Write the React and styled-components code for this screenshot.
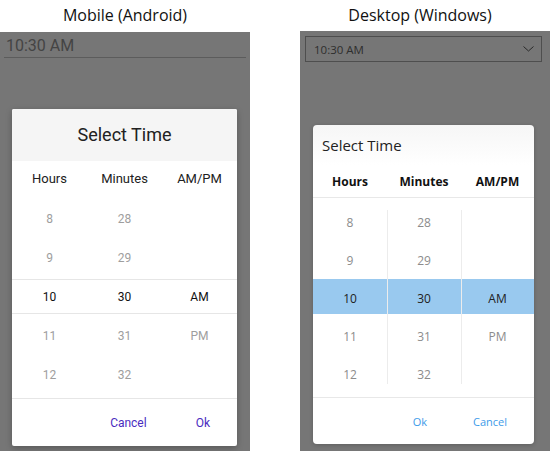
import styled, { createGlobalStyle } from "styled-components";

const GlobalStyle = createGlobalStyle`
  body {
    margin: 0;
    background: #ffffff;
  }
`;

const Page = styled.div`
  width: 550px;
  height: 451px;
  display: flex;
  gap: 50px;
  overflow: hidden;
`;

const Column = styled.div`
  width: 250px;
  display: flex;
  flex-direction: column;
`;

const Title = styled.div`
  height: ${(p) => p.$height}px;
  line-height: 31px;
  text-align: center;
  padding-right: ${(p) => p.$shift || 0}px;
  font-family: "Open Sans", sans-serif;
  font-size: 16px;
  color: #111;
`;

const Screen = styled.div`
  flex: 1;
  background: #767676;
  display: flex;
  flex-direction: column;
`;

/* ---------- Android ---------- */

const AndroidInput = styled.div`
  margin: 0 4px;
  padding: 2px 0 0 2px;
  line-height: 23px;
  font-family: Roboto, sans-serif;
  font-size: 16px;
  color: #444;
  border-bottom: 1px solid #5c5c5c;
`;

const AndroidDialog = styled.div`
  margin: 51px 13px 0 12px;
  height: 337px;
  background: #fff;
  border-radius: 2px;
  box-shadow: 0 2px 6px rgba(0, 0, 0, 0.25);
  display: flex;
  flex-direction: column;
  font-family: Roboto, sans-serif;
  overflow: hidden;
`;

const AndroidHeader = styled.div`
  height: 52px;
  line-height: 52px;
  background: #f5f5f5;
  text-align: center;
  font-size: 18px;
  color: #212121;
`;

const AndroidGrid = styled.div`
  display: grid;
  grid-template-columns: repeat(3, 1fr);
`;

const AndroidHeading = styled.div`
  height: 38px;
  padding-bottom: 4px;
  box-sizing: border-box;
  display: flex;
  align-items: center;
  justify-content: center;
  font-size: 13px;
  color: #212121;
`;

const AndroidPicker = styled(AndroidGrid)`
  position: relative;
  &::before {
    content: "";
    position: absolute;
    left: 0;
    right: 0;
    top: 80px;
    height: 33px;
    border-top: 1px solid #e6e6e6;
    border-bottom: 1px solid #e6e6e6;
  }
`;

const AndroidCell = styled.div`
  height: 39px;
  display: flex;
  align-items: center;
  justify-content: center;
  font-size: 12px;
  color: ${(p) => (p.$selected ? "#111" : "#9e9e9e")};
`;

const AndroidFooter = styled.div`
  margin-top: 4px;
  border-top: 1px solid #e6e6e6;
  height: 47px;
  display: flex;
  align-items: center;
  justify-content: flex-end;
  gap: 17px;
  padding-right: 11px;
`;

const AndroidButton = styled.div`
  padding: 8px 16px;
  font-size: 12px;
  font-weight: 400;
  color: #4a2cc0;
`;

/* ---------- Windows ---------- */

const WinInput = styled.div`
  margin: 5px 8px 0 5px;
  height: 26px;
  box-sizing: border-box;
  border: 1px solid #4e4e4e;
  display: flex;
  align-items: center;
  justify-content: space-between;
  padding: 0 7px 0 8px;
  font-family: "Open Sans", sans-serif;
  font-size: 11.5px;
  color: #2e2e2e;
`;

const WinDialog = styled.div`
  margin: 63px 16px 0 13px;
  height: 319px;
  background: linear-gradient(#f6f6f6, #ffffff 40px);
  border-radius: 4px;
  box-shadow: 0 1px 4px rgba(0, 0, 0, 0.2);
  display: flex;
  flex-direction: column;
  font-family: "Open Sans", sans-serif;
  overflow: hidden;
`;

const WinTitle = styled.div`
  height: 40px;
  line-height: 40px;
  padding-left: 9px;
  font-size: 15px;
  color: #222;
`;

const WinGrid = styled.div`
  display: grid;
  grid-template-columns: 74px 74px 73px;
`;

const WinHeadings = styled(WinGrid)`
  height: 33px;
  box-sizing: border-box;
  border-bottom: 1px solid #e8e8e8;
`;

const WinHeading = styled.div`
  display: flex;
  align-items: center;
  justify-content: center;
  font-size: 12px;
  font-weight: 700;
  color: #111;
`;

const WinColumn = styled.div`
  position: relative;
  display: flex;
  flex-direction: column;
  gap: 3px;
  padding: 5px 0 7px;
  ${(p) =>
    p.$divider &&
    `&::before {
      content: "";
      position: absolute;
      left: 0;
      top: 12px;
      bottom: 13px;
      width: 1px;
      background: #ececec;
      z-index: 1;
    }`}
`;

const WinCell = styled.div`
  height: 35px;
  padding-top: 3px;
  box-sizing: border-box;
  display: flex;
  align-items: center;
  justify-content: center;
  font-size: 12px;
  color: ${(p) => (p.$selected ? "#222" : "#8c8c8c")};
  background: ${(p) => (p.$selected ? "#99c9ef" : "transparent")};
`;

const WinFooter = styled.div`
  border-top: 1px solid #e8e8e8;
  height: 46px;
  display: flex;
  align-items: center;
  justify-content: flex-end;
  gap: 30px;
  padding-right: 19px;
`;

const WinButton = styled.div`
  padding: 6px 8px;
  font-size: 11px;
  color: #3d9be9;
`;

const hours = ["8", "9", "10", "11", "12"];
const minutes = ["28", "29", "30", "31", "32"];
const meridiem = ["", "", "AM", "PM", ""];
const columns = [hours, minutes, meridiem];
const headings = ["Hours", "Minutes", "AM/PM"];

const Chevron = () => (
  <svg width="11" height="6" viewBox="0 0 11 6">
    <polyline points="0.5,0.5 5.5,5 10.5,0.5" fill="none" stroke="#2a2a2a" strokeWidth="1" />
  </svg>
);

const App = () => {
  return (
    <Page>
      <GlobalStyle />
      <Column>
        <Title $height={32}>Mobile (Android)</Title>
        <Screen>
          <AndroidInput>10:30 AM</AndroidInput>
          <AndroidDialog>
            <AndroidHeader>Select Time</AndroidHeader>
            <AndroidGrid>
              {headings.map((h) => (
                <AndroidHeading key={h}>{h}</AndroidHeading>
              ))}
            </AndroidGrid>
            <AndroidPicker>
              {columns.map((col, c) => (
                <div key={c}>
                  {col.map((v, i) => (
                    <AndroidCell key={i} $selected={i === 2}>
                      {v}
                    </AndroidCell>
                  ))}
                </div>
              ))}
            </AndroidPicker>
            <AndroidFooter>
              <AndroidButton>Cancel</AndroidButton>
              <AndroidButton>Ok</AndroidButton>
            </AndroidFooter>
          </AndroidDialog>
        </Screen>
      </Column>
      <Column>
        <Title $height={31} $shift={10}>Desktop (Windows)</Title>
        <Screen>
          <WinInput>
            <span>10:30 AM</span>
            <Chevron />
          </WinInput>
          <WinDialog>
            <WinTitle>Select Time</WinTitle>
            <WinHeadings>
              {headings.map((h) => (
                <WinHeading key={h}>{h}</WinHeading>
              ))}
            </WinHeadings>
            <WinGrid>
              {columns.map((col, c) => (
                <WinColumn key={c} $divider={c > 0}>
                  {col.map((v, i) => (
                    <WinCell key={i} $selected={i === 2}>
                      {v}
                    </WinCell>
                  ))}
                </WinColumn>
              ))}
            </WinGrid>
            <WinFooter>
              <WinButton>Ok</WinButton>
              <WinButton>Cancel</WinButton>
            </WinFooter>
          </WinDialog>
        </Screen>
      </Column>
    </Page>
  );
};

export default App;
